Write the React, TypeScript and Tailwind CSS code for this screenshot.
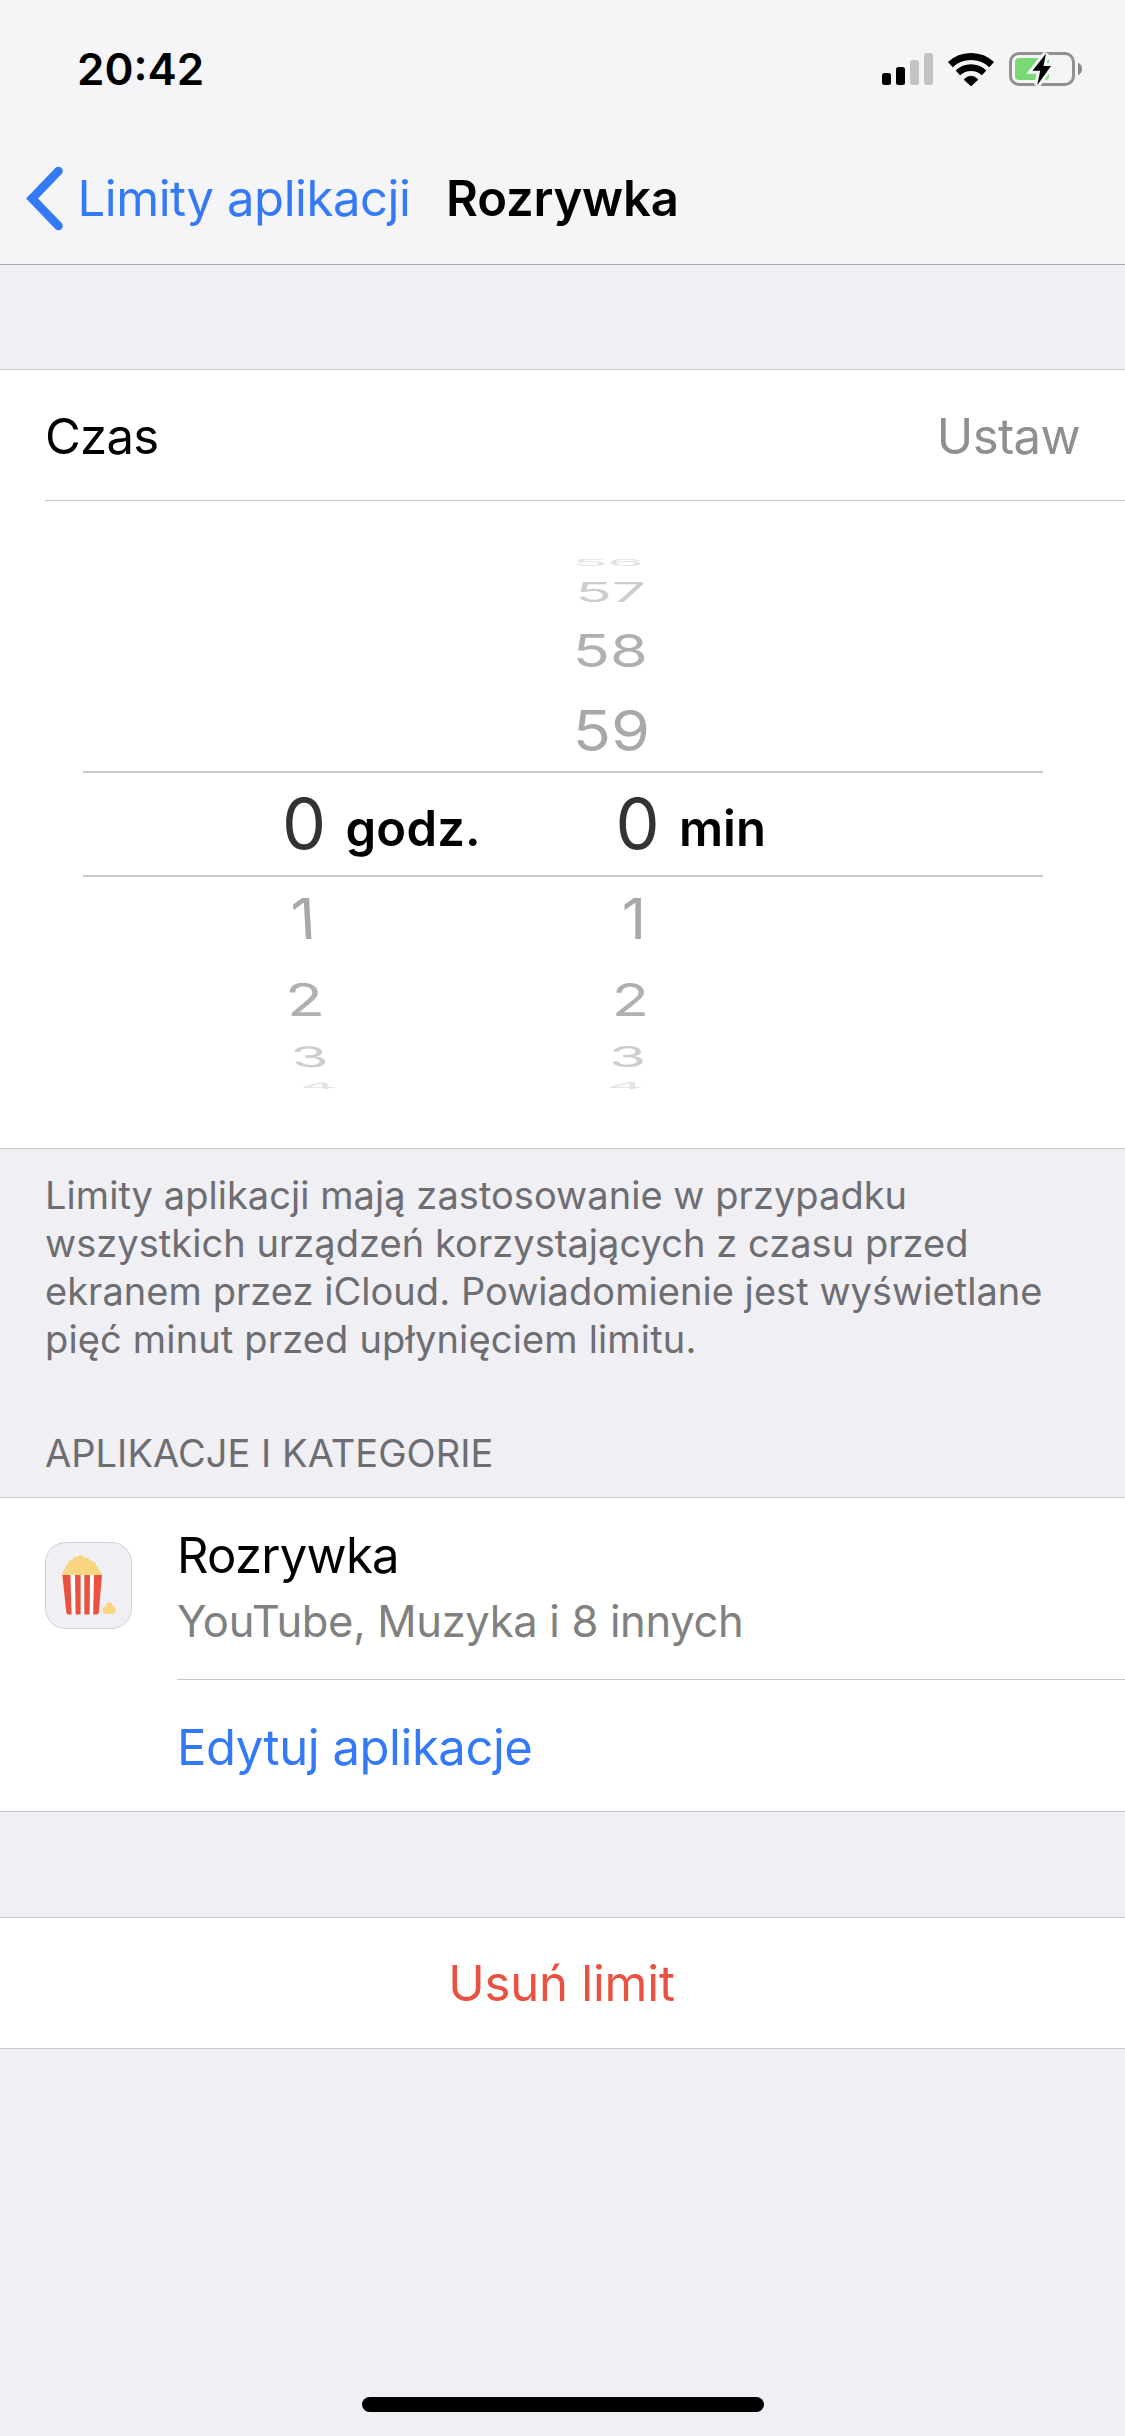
const wheelAbove = [
	{
		minutes: "56",
		row: "h-[21px] text-[#e2e2e5]",
		minutesShape: "-translate-x-[22px] scale-x-[0.97] scale-y-[0.15]",
	},
	{
		minutes: "57",
		row: "h-[37px] text-[#cdcdd0]",
		minutesShape: "-translate-x-[19.5px] scale-x-[1] scale-y-[0.46]",
	},
	{
		minutes: "58",
		row: "h-[79px] text-[#b0b0b1]",
		minutesShape: "-translate-x-[19.5px] scale-x-[1.02] scale-y-[0.76]",
	},
	{
		minutes: "59",
		row: "h-[82px] text-[#a8a8a9]",
		minutesShape: "-translate-x-[18.5px] scale-x-[1.05] scale-y-[0.94]",
	},
]

const wheelBelow = [
	{
		value: "1",
		row: "h-[82px] text-[#a8a8a9]",
		hoursShape: "-translate-x-[2px] scale-y-[0.94] skew-x-[3deg]",
		minutesShape: "translate-x-[4px] scale-y-[0.94]",
	},
	{
		value: "2",
		row: "h-[79px] text-[#b0b0b1]",
		hoursShape: "-translate-x-[0.5px] scale-x-[1.04] scale-y-[0.75] skew-x-[4deg]",
		minutesShape: "translate-x-0 scale-x-[1.02] scale-y-[0.75]",
	},
	{
		value: "3",
		row: "h-[37px] text-[#cdcdd0]",
		hoursShape: "translate-x-[5px] scale-y-[0.47] skew-x-[4deg]",
		minutesShape: "-translate-x-[2.5px] scale-y-[0.47]",
	},
	{
		value: "4",
		row: "h-[21px] text-[#e2e2e5]",
		hoursShape: "translate-x-[12.5px] scale-x-[0.97] scale-y-[0.15] skew-x-[4deg]",
		minutesShape: "-translate-x-[5px] scale-x-[0.97] scale-y-[0.15]",
	},
]

function SignalIcon() {
	return (
		<svg width="51" height="32" viewBox="0 0 51 32">
			<rect x="0" y="20" width="9" height="12" rx="2.5" fill="#000" />
			<rect x="14" y="14" width="9" height="18" rx="2.5" fill="#000" />
			<rect x="28" y="7" width="9" height="25" rx="2.5" fill="#c3c3c5" />
			<rect x="42" y="0" width="9" height="32" rx="2.5" fill="#c3c3c5" />
		</svg>
	)
}

function WifiIcon() {
	return (
		<svg width="46" height="33" viewBox="0 0 46 33">
			<path d="M2.35 11.55A30.5 30.5 0 0 1 43.65 11.55" fill="none" stroke="#000" strokeWidth="7" />
			<path d="M9.9 19.8A19.3 19.3 0 0 1 36.1 19.8" fill="none" stroke="#000" strokeWidth="6.6" />
			<path d="M16 26.5Q23 19.8 30 26.5L23 33Z" fill="#000" stroke="#000" strokeWidth="0.8" strokeLinejoin="round" />
		</svg>
	)
}

function BatteryIcon() {
	return (
		<svg width="73" height="36" viewBox="0 -1 73 36">
			<rect x="1.5" y="1.5" width="63" height="31" rx="8.5" fill="none" stroke="#919194" strokeWidth="3" />
			<rect x="6" y="6" width="34" height="22" rx="4" fill="#79d976" />
			<path d="M69 10.8C71.6 12 73 14.3 73 17C73 19.7 71.6 22 69 23.2Z" fill="#88888b" />
			<path
				d="M37 1.5L23.5 18.8H31.2L28.2 33.3L42 14H34.5Z"
				fill="#000"
				stroke="#f5f5f8"
				strokeWidth="6"
				paintOrder="stroke"
			/>
		</svg>
	)
}

function PopcornIcon() {
	return (
		<svg width="87" height="87" viewBox="0 0 87 87">
			<rect x="0.5" y="0.5" width="86" height="86" rx="20" fill="#efeff4" stroke="#d2d2d6" />
			<path
				d="M17.3 33C17 30.5 18 28.7 19.8 28.3C19.2 25.5 20.6 23.4 22.8 22.8C22.4 19.8 24.5 17.6 27.6 17.6C28.4 15.4 30.4 14.5 32.3 15C33.5 13 38 13 39.2 16C41.5 15 44.4 16 44.8 18.8C48 18 51.3 20.3 51 23.5C53.3 24.6 54 26.5 53.6 28.5C56 29.2 57.2 31 57 33Z"
				fill="#f7d581"
			/>
			<path d="M17.3 33H57L53.9 70C53.7 71.8 52.8 72.5 51.5 72.5H23.7C22.3 72.5 21.5 71.8 21.3 70Z" fill="#fff" />
			<path d="M17.3 33H25.4L26.6 72.5H23.7C22.3 72.5 21.5 71.8 21.3 70Z" fill="#ea5140" />
			<path d="M30 33H35.6V72.5H30.6Z" fill="#ea5140" />
			<path d="M39.3 33H45L44.6 72.5H39.3Z" fill="#ea5140" />
			<path d="M49 33H57L53.9 70C53.7 71.8 52.8 72.5 51.5 72.5H48.2Z" fill="#ea5140" />
			<path
				d="M64.2 60.6C66.6 60.6 68.1 62.4 68 64.6C70 65.2 70.9 66.7 70.7 68.8C70.5 71.5 67.6 72.6 64.2 71.4C60.8 72.6 57.9 71.5 57.7 68.8C57.5 66.7 58.4 65.2 60.4 64.6C60.3 62.4 61.8 60.6 64.2 60.6Z"
				fill="#f7d581"
			/>
		</svg>
	)
}

function Header() {
	return (
		<header className="h-[265px] border-b border-[#a7a7ab] bg-[#f5f5f8]">
			<div className="flex h-[138px] items-center pr-[43px] pl-[77px]">
				<span className="text-[44px] font-semibold">20:42</span>
				<div className="ml-auto flex items-center gap-[15px]">
					<SignalIcon />
					<WifiIcon />
					<BatteryIcon />
				</div>
			</div>
			<nav className="flex h-[120px] items-center pl-[24px]">
				<svg width="42" height="66" viewBox="0 0 42 66">
					<path d="M34.5 6L8 33.5L34.5 61" fill="none" stroke="#347af7" strokeWidth="8.6" strokeLinecap="round" />
				</svg>
				<a className="ml-[11.5px] w-[368.5px] pt-[2px] text-[49px] tracking-[-0.45px] text-[#347af7]">
					Limity aplikacji
				</a>
				<h1 className="pt-[2px] text-[49px] font-semibold tracking-[-0.2px]">Rozrywka</h1>
			</nav>
		</header>
	)
}

function TimePicker() {
	return (
		<div className="h-[647px] pt-[51px] pr-[82px] pl-[83px] leading-none">
			{wheelAbove.map((item) => (
				<div key={item.minutes} className={`flex items-center text-[60px] ${item.row}`}>
					<div className="w-[444px]" />
					<div className="flex w-[206px] justify-center">
						<span className={item.minutesShape}>{item.minutes}</span>
					</div>
				</div>
			))}
			<div className="flex h-[106px] items-center border-y-2 border-[#c9c9cb] pl-[199px]">
				<span className="w-[63.5px] text-[70px] text-[#333]">0</span>
				<span className="w-[270px] pt-[8px] text-[49px] font-semibold tracking-[0.2px]">godz.</span>
				<span className="w-[63.5px] text-[70px] text-[#333]">0</span>
				<span className="pt-[8px] text-[49px] font-semibold">min</span>
			</div>
			{wheelBelow.map((item) => (
				<div key={item.value} className={`flex items-center text-[60px] ${item.row}`}>
					<div className="flex w-[444px] justify-center">
						<span className={item.hoursShape}>{item.value}</span>
					</div>
					<div className="flex w-[206px] justify-center">
						<span className={item.minutesShape}>{item.value}</span>
					</div>
				</div>
			))}
		</div>
	)
}

export default function App() {
	return (
		<div className="flex h-[2436px] w-[1125px] flex-col overflow-hidden bg-[#efeff4] font-['Inter','Liberation_Sans',sans-serif] text-black">
			<Header />
			<section className="mt-[104px] border-y border-[#c8c7cc] bg-white">
				<div className="ml-[45px] flex h-[131px] items-center justify-between border-b border-[#c8c7cc] pt-[4px] pr-[45px] text-[49px]">
					<span className="tracking-[-0.7px]">Czas</span>
					<span className="tracking-[-0.6px] text-[#8e8e93]">Ustaw</span>
				</div>
				<TimePicker />
			</section>
			<p className="px-[45px] pt-[22px] text-[38px] leading-[48px] tracking-[0.05px] text-[#6d6d72]">
				Limity aplikacji mają zastosowanie w przypadku
				<br />
				wszystkich urządzeń korzystających z czasu przed
				<br />
				ekranem przez iCloud. Powiadomienie jest wyświetlane
				<br />
				<span className="tracking-[0.16px]">pięć minut przed upłynięciem limitu.</span>
			</p>
			<h2 className="mt-[66px] pb-[20px] pl-[45px] text-[38px] leading-[48px] tracking-[0.05px] text-[#6d6d72]">
				APLIKACJE I KATEGORIE
			</h2>
			<section className="border-y border-[#c8c7cc] bg-white">
				<div className="flex pl-[45px]">
					<div className="w-[132px] pt-[44px]">
						<PopcornIcon />
					</div>
					<div className="h-[182px] flex-1 border-b border-[#c8c7cc] pt-[28px]">
						<p className="text-[49px] leading-[60px] tracking-[-0.75px]">Rozrywka</p>
						<p className="mt-[5px] text-[43.5px] leading-[60px] tracking-[-0.32px] text-[#808080]">
							YouTube, Muzyka i 8 innych
						</p>
					</div>
				</div>
				<a className="flex h-[131px] items-center pt-[5px] pl-[177px] text-[49px] tracking-[-0.45px] text-[#347af7]">
					Edytuj aplikacje
				</a>
			</section>
			<button className="mt-[105px] h-[132px] border-y border-[#c8c7cc] bg-white pt-[2px] pr-[2px] text-[49px] tracking-[-0.2px] text-[#ea5140]">
				Usuń limit
			</button>
			<div className="mx-auto mt-auto mb-[24px] h-[15px] w-[402px] rounded-full bg-black" />
		</div>
	)
}
